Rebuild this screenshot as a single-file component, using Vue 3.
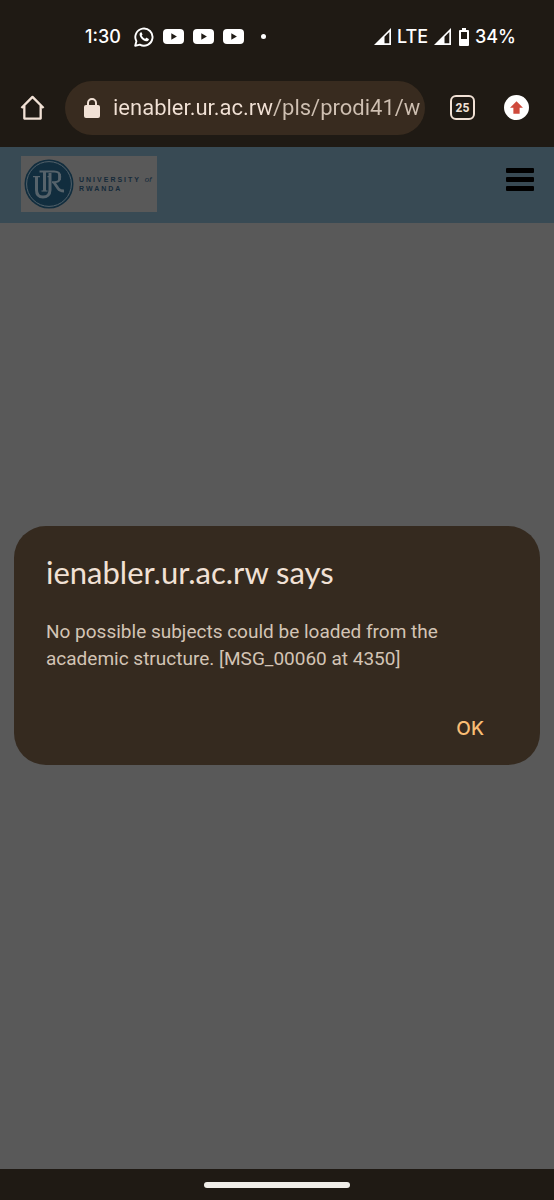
<template>
  <div class="phone">
    <header class="status-bar">
      <div class="status-left">
        <span class="clock">1:30</span>
        <svg class="whatsapp" viewBox="0 0 20 20" role="img" aria-label="WhatsApp">
          <path d="M1.2 18.8l1.2-4.6a8.6 8.6 0 1 1 3.4 3.4z" fill="none" stroke="#fff" stroke-width="1.9" stroke-linejoin="round" />
          <path d="M6.9 5.2c-.9.5-1.5 1.4-1.3 2.5.5 3.2 3.3 6 6.6 6.6 1.1.1 2.1-.4 2.5-1.3.2-.5.2-.9.1-1.1l-2.2-1.1c-.3-.1-.5 0-.7.2l-.7.9c-1.6-.6-2.8-1.8-3.5-3.3l.7-.8c.1-.2.1-.4 0-.6L7.5 5.3c-.1-.2-.3-.2-.6-.1z" fill="#fff" />
        </svg>
        <svg v-for="n in 3" :key="n" class="youtube" viewBox="0 0 21 15" role="img" aria-label="YouTube">
          <rect width="21" height="15" rx="4" fill="#fff" />
          <path d="M8.3 4.3v6.4l5.6-3.2z" fill="#1f1a14" />
        </svg>
        <span class="dot"></span>
      </div>
      <div class="status-right">
        <svg class="signal" viewBox="0 0 17 17" aria-hidden="true">
          <path d="M0 17L17 0V17z" fill="#fff" />
          <path d="M10.5 8.8L15.3 4V15.3H10.5z" fill="#1f1a14" />
        </svg>
        <span>LTE</span>
        <svg class="signal" viewBox="0 0 17 17" aria-hidden="true">
          <path d="M0 17L17 0V17z" fill="#fff" />
          <path d="M10.5 8.8L15.3 4V15.3H10.5z" fill="#1f1a14" />
        </svg>
        <svg class="battery" viewBox="0 0 10 18" aria-hidden="true">
          <path d="M3 0h4v2h2a1 1 0 0 1 1 1v14a1 1 0 0 1-1 1H1a1 1 0 0 1-1-1V3a1 1 0 0 1 1-1h2z" fill="#fff" />
          <path d="M2 4h6v7H2z" fill="#1f1a14" />
        </svg>
        <span>34%</span>
      </div>
    </header>

    <nav class="toolbar">
      <button class="icon-button" type="button" aria-label="Home">
        <svg class="home" viewBox="0 0 26 26">
          <path d="M1.5 13.5L13 2l11.5 11.5M4.5 11v13.5h17V11" fill="none" stroke="#f1e1d5" stroke-width="2.4" stroke-linejoin="round" />
        </svg>
      </button>
      <label class="address">
        <svg class="lock" viewBox="0 0 16 20" aria-hidden="true">
          <path d="M4 8V5a4 4 0 0 1 8 0v3" fill="none" stroke="#f1e1d5" stroke-width="2" />
          <rect y="7" width="16" height="13" rx="2" fill="#f1e1d5" />
        </svg>
        <input v-model="url" class="url" type="text" aria-label="Address" spellcheck="false" />
      </label>
      <button class="tabs" type="button" aria-label="Open tabs">{{ tabCount }}</button>
      <button class="icon-button" type="button" aria-label="Update available">
        <svg class="update" viewBox="0 0 24 24">
          <circle cx="12" cy="12" r="12" fill="#fff" />
          <path d="M12 6l6.2 6.2H15V18H9v-5.8H5.8z" fill="#cf4a3c" />
        </svg>
      </button>
    </nav>

    <main class="page">
      <div class="site-header">
        <a class="logo" href="#" aria-label="University of Rwanda">
          <svg class="seal" viewBox="0 0 50 50" aria-hidden="true">
            <circle cx="25" cy="25" r="24.5" fill="#112d3e" />
            <circle cx="25" cy="25" r="22.4" fill="none" stroke="#52616a" stroke-width="1" />
            <g fill="none" stroke="#56636b">
              <path d="M9 17.700h7M23.500 17.700h3" stroke-width="1.200" />
              <path d="M12.500 17.500V31c0 4.500 2.300 7 6.500 7s7-2.500 7-7V14" stroke-width="3" />
              <path d="M15.500 12.500H30c4.200 0 6.200 2 6.200 5.300 0 3.500-2.200 5.500-6.200 5.500h-2" stroke-width="2" />
              <path d="M35.500 15v6" stroke-width="2.800" />
              <path d="M30 23.500l4.300 6.300c1 1.500 2.500 2.200 5.700 2.200" stroke-width="2.800" />
              <path d="M20.500 12.500V32" stroke-width="3" />
              <path d="M17.500 32h6" stroke-width="1.200" />
            </g>
          </svg>
          <span class="wordmark">UNIVERSITY <i>of</i><br />RWANDA</span>
        </a>
        <button class="menu" type="button" aria-label="Menu">
          <span v-for="n in 3" :key="n"></span>
        </button>
      </div>

      <div v-if="open" class="overlay">
        <section class="dialog" role="alertdialog" aria-labelledby="dialog-title" aria-describedby="dialog-text">
          <h1 id="dialog-title">ienabler.ur.ac.rw says</h1>
          <p id="dialog-text">No possible subjects could be loaded from the academic structure. [MSG_00060 at 4350]</p>
          <button class="ok" type="button" @click="open = false">OK</button>
        </section>
      </div>
    </main>

    <footer class="gesture-bar">
      <span class="handle"></span>
    </footer>
  </div>
</template>

<script setup>
import { ref } from 'vue'

const url = ref('ienabler.ur.ac.rw/pls/prodi41/w')
const tabCount = ref(25)
const open = ref(true)
</script>

<style>
body {
  margin: 0;
  background: #1f1a14;
}
</style>

<style scoped>
* {
  box-sizing: border-box;
}

button {
  padding: 0;
  border: none;
  background: none;
  cursor: pointer;
}

svg {
  display: block;
  flex: none;
}

.phone {
  min-height: 100vh;
  display: flex;
  flex-direction: column;
  background: #1f1a14;
  font-family: Roboto, sans-serif;
}

/* --- Status bar --- */
.status-bar {
  height: 73px;
  padding: 0 38px 0 85px;
  display: flex;
  align-items: center;
  justify-content: space-between;
  color: #fff;
  font-family: Inter, sans-serif;
  font-size: 18px;
  font-weight: 500;
}

.status-left {
  display: flex;
  align-items: center;
  gap: 9px;
}

.clock {
  margin-right: 4px;
}

.whatsapp {
  width: 20px;
  height: 20px;
}

.youtube {
  width: 21px;
  height: 15px;
}

.dot {
  width: 5px;
  height: 5px;
  margin-left: 8px;
  border-radius: 50%;
  background: #fff;
}

.status-right {
  display: flex;
  align-items: center;
  gap: 6px;
}

.signal {
  width: 17px;
  height: 17px;
}

.battery {
  width: 10px;
  height: 18px;
  margin-left: 2px;
}

/* --- Browser toolbar --- */
.toolbar {
  height: 74px;
  padding: 0 25px 5px 20px;
  display: flex;
  align-items: center;
}

.home {
  width: 25px;
  height: 25px;
}

.address {
  flex: 1;
  min-width: 0;
  height: 54px;
  margin: 0 25px 0 20px;
  padding: 0 5px 0 19px;
  display: flex;
  align-items: center;
  gap: 13px;
  border-radius: 27px;
  background: #382b1f;
}

.lock {
  width: 16px;
  height: 20px;
}

/* host part is brighter than the path */
.url {
  flex: 1;
  min-width: 0;
  height: 32px;
  padding: 0;
  border: none;
  outline: none;
  background: linear-gradient(90deg, #f1e1d5 160px, #cfc0b2 160px);
  background-clip: text;
  color: transparent;
  font-family: Roboto, sans-serif;
  font-size: 22px;
}

.tabs {
  width: 25px;
  height: 25px;
  margin-right: 29px;
  border: 2px solid #f1e1d5;
  border-radius: 6px;
  color: #f1e1d5;
  font-family: Roboto, sans-serif;
  font-size: 12px;
  font-weight: 700;
}

.update {
  width: 25px;
  height: 25px;
}

/* --- Dimmed web page --- */
.page {
  position: relative;
  flex: 1;
  background: #595959;
}

.site-header {
  height: 76px;
  padding: 9px 20px 0 21px;
  display: flex;
  align-items: flex-start;
  justify-content: space-between;
  background: #384a54;
}

.logo {
  width: 136px;
  height: 56px;
  padding-left: 3px;
  display: flex;
  align-items: center;
  gap: 5px;
  background: #595959;
  color: #152a3a;
  text-decoration: none;
}

.seal {
  width: 50px;
  height: 50px;
}

.wordmark {
  font-family: "Liberation Sans", Arial, sans-serif;
  font-size: 7px;
  font-weight: 700;
  line-height: 9px;
  letter-spacing: 2px;
  white-space: nowrap;
}

.wordmark i {
  font-size: 8px;
  font-weight: 400;
  letter-spacing: 0;
}

.menu {
  width: 28px;
  margin-top: 12px;
  display: flex;
  flex-direction: column;
  gap: 4px;
}

.menu span {
  width: 28px;
  height: 5px;
  border-radius: 1px;
  background: #000;
}

/* --- Alert dialog --- */
.overlay {
  position: absolute;
  inset: 0;
  padding: 0 14px 25px;
  display: flex;
  align-items: center;
}

.dialog {
  width: 100%;
  padding: 28px 32px 21px;
  display: flex;
  flex-direction: column;
  border-radius: 32px;
  background: #352a1f;
}

.dialog h1 {
  margin: 0 0 28px;
  color: #f1e1d5;
  font-family: Lato, sans-serif;
  font-size: 31px;
  font-weight: 400;
  line-height: 36px;
}

.dialog p {
  margin: 0 0 41px;
  color: #d3c4b5;
  font-size: 19px;
  line-height: 27px;
}

.ok {
  align-self: flex-end;
  height: 31px;
  padding: 0 24px;
  color: #f8bd74;
  font-family: Inter, sans-serif;
  font-size: 19px;
  font-weight: 500;
}

/* --- Gesture bar --- */
.gesture-bar {
  height: 31px;
  display: flex;
  align-items: center;
  justify-content: center;
}

.handle {
  width: 146px;
  height: 6px;
  border-radius: 3px;
  background: #f0eee9;
}
</style>
